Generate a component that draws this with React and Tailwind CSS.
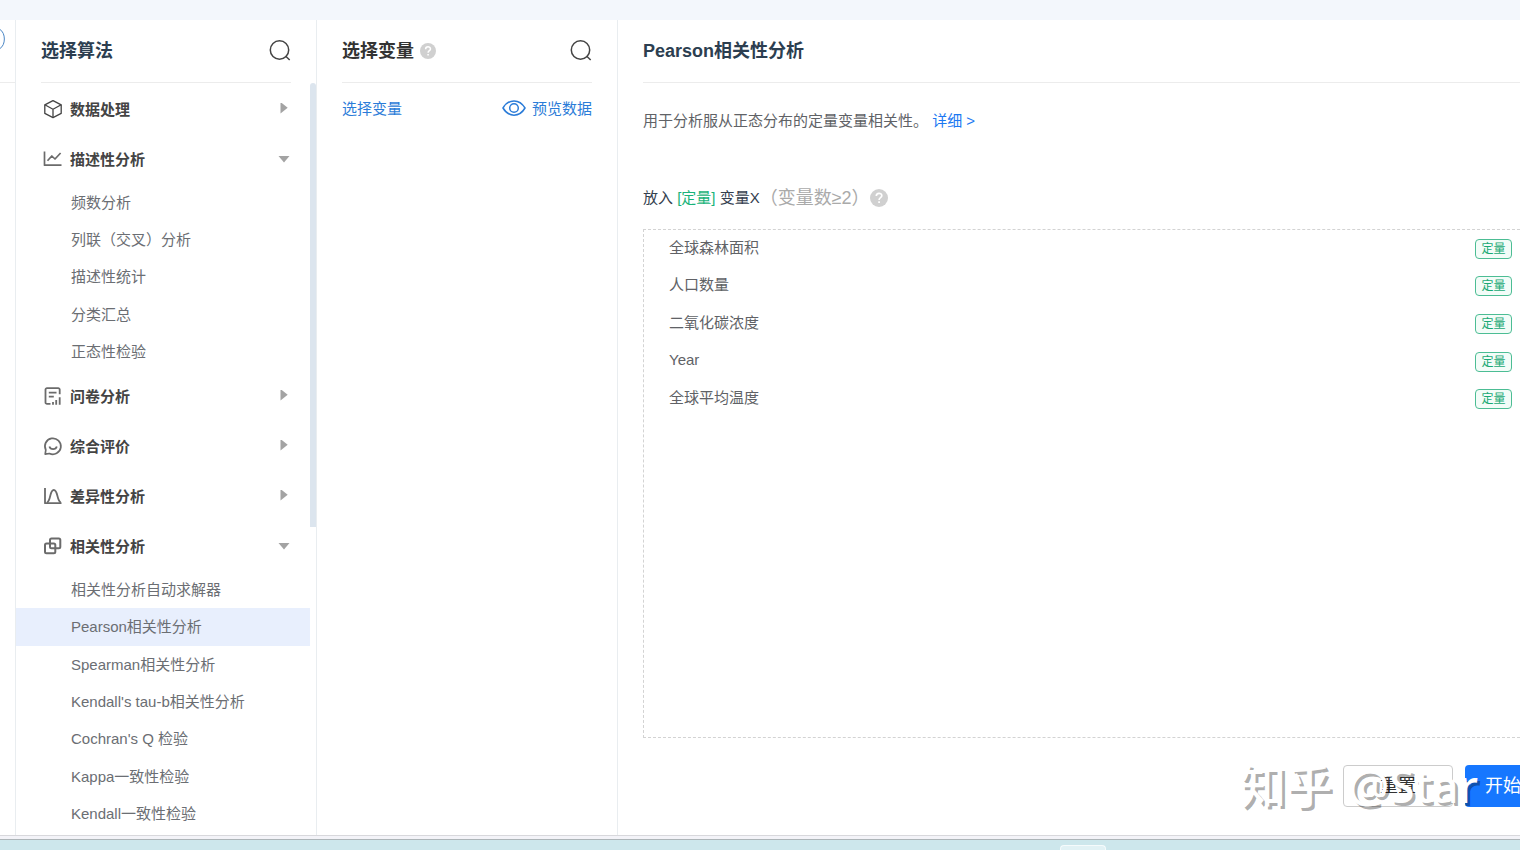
import React from "react";

const categories = [
  { name: "数据处理", icon: "cube" },
  {
    name: "描述性分析",
    icon: "trend",
    listHeight: "h-[187px]",
    items: ["频数分析", "列联（交叉）分析", "描述性统计", "分类汇总", "正态性检验"],
  },
  { name: "问卷分析", icon: "survey" },
  { name: "综合评价", icon: "smile" },
  { name: "差异性分析", icon: "curve" },
  {
    name: "相关性分析",
    icon: "squares",
    listHeight: "h-[262px]",
    items: [
      "相关性分析自动求解器",
      "Pearson相关性分析",
      "Spearman相关性分析",
      "Kendall's tau-b相关性分析",
      "Cochran's Q 检验",
      "Kappa一致性检验",
      "Kendall一致性检验",
    ],
  },
];

const variables = ["全球森林面积", "人口数量", "二氧化碳浓度", "Year", "全球平均温度"];

const iconShapes = {
  cube: (
    <g strokeWidth="1.3" stroke="#444">
      <path d="M9 .6 17.200 4.800v8.600L9 17.600.8 13.400V4.800Z" />
      <path d="M.8 4.800l8.200 4.400 8.200-4.400M9 9.200v8.400" />
    </g>
  ),
  trend: (
    <g strokeWidth="1.7">
      <path d="M.5 1.500v13.700h17" />
      <path d="M3.500 10.800 7.800 6l3.200 3 5.600-6" />
    </g>
  ),
  survey: (
    <g strokeWidth="1.8">
      <path d="M6.500 16.900H3a1.500 1.500 0 0 1-1.500-1.500V2.600a1.500 1.500 0 0 1 1.500-1.500h11.200a1.500 1.500 0 0 1 1.500 1.500v4.600" />
      <path d="M4.800 5.700h7.700M4.800 9.700h5M9 17.700v-2.800M12.200 17.700v-4.700M15.700 17.700v-7.500" />
    </g>
  ),
  smile: (
    <g strokeWidth="1.7">
      <path d="M1.200 17.200l.6-4.200A8 8 0 1 1 5.400 16.500Z" />
      <path d="M5.400 9.500c1 3.500 6.400 3.500 7.400 0" />
    </g>
  ),
  curve: (
    <g strokeWidth="1.8">
      <path d="M1 1v15.200h16.500" />
      <path d="M3 15.500C7 14 5.500 3 9.800 3s2.900 11 7 12.500" />
    </g>
  ),
  squares: (
    <g strokeWidth="2">
      <rect x="6" y="1.500" width="10.300" height="9.800" rx="1.500" />
      <rect x="1" y="6.500" width="10.300" height="9.800" rx="1.500" />
    </g>
  ),
};

function CategoryIcon({ name }) {
  return (
    <svg viewBox="0 0 18 18" className="size-[18px] shrink-0 overflow-visible" fill="none" stroke="#6b6b6b" strokeLinejoin="round" aria-hidden="true">
      {iconShapes[name]}
    </svg>
  );
}

function Arrow({ open }) {
  return (
    <svg viewBox="0 0 12 12" className="ml-auto size-3 shrink-0" fill="#a3a3a3" aria-hidden="true">
      {open ? <path d="M.5 3h11L6 9.500Z" /> : <path d="M2.500 -1v11.500L9.700 4.700Z" />}
    </svg>
  );
}

function SearchButton({ label }) {
  return (
    <button type="button" aria-label={label} className="ml-auto">
      <svg viewBox="0 0 22 22" className="size-[22px]" fill="none" stroke="#444" strokeWidth="1.500" aria-hidden="true">
        <circle cx="10.500" cy="10" r="9.200" />
        <path d="m16.500 16 4.200 4" />
      </svg>
    </button>
  );
}

function HelpButton({ size }) {
  return (
    <button type="button" aria-label="帮助" className={size}>
      <svg viewBox="0 0 18 18" className="size-full" fill="none" aria-hidden="true">
        <circle cx="9" cy="9" r="9" fill="#d0d0d0" />
        <path d="M6.300 7c0-3.600 5.500-3.500 5.500-.2 0 1.900-2.700 1.900-2.700 4.100M9.100 12.300v1.800" stroke="#fff" strokeWidth="1.700" />
      </svg>
    </button>
  );
}

function PanelHeader({ children }) {
  return <header className="mx-[25px] flex h-[63px] shrink-0 items-center border-b border-[#ececec]">{children}</header>;
}

function AlgorithmPanel() {
  return (
    <section className="flex w-[301px] shrink-0 flex-col border-r border-[#e9edf0]">
      <PanelHeader>
        <h2 className="text-lg font-bold text-[#2c3e50]">选择算法</h2>
        <SearchButton label="搜索算法" />
      </PanelHeader>
      <div className="flex min-h-0 flex-1 overflow-hidden">
        <nav className="min-w-0 flex-1 pt-px">
          {categories.map((c) => (
            <div key={c.name}>
              <button type="button" aria-expanded={Boolean(c.items)} className="flex h-[50px] w-full items-center gap-2 pr-5 pl-7 text-[15px] font-bold text-[#444]">
                <CategoryIcon name={c.icon} />
                <span className="pt-0.5">{c.name}</span>
                <Arrow open={Boolean(c.items)} />
              </button>
              {c.items && (
                <ul className={`grid auto-rows-fr ${c.listHeight}`}>
                  {c.items.map((item) => (
                    <li key={item} className={item === "Pearson相关性分析" ? "bg-[#e8effd]" : ""}>
                      <a href="#" className="flex h-full items-center pl-[55px] text-[15px] leading-5 text-[#6b6e73]">
                        {item}
                      </a>
                    </li>
                  ))}
                </ul>
              )}
            </div>
          ))}
        </nav>
        <div className="h-[444px] w-1.5 shrink-0 rounded-t-sm bg-[#dce5ee]" />
      </div>
    </section>
  );
}

function VariablePanel() {
  return (
    <section className="flex w-[301px] shrink-0 flex-col border-r border-[#e9edf0]">
      <PanelHeader>
        <h2 className="text-lg font-bold text-[#333]">选择变量</h2>
        <HelpButton size="ml-1.5 size-4" />
        <SearchButton label="搜索变量" />
      </PanelHeader>
      <div className="mx-[25px] flex items-center justify-between pt-[15px] text-[15px] text-[#2b7cd8]">
        <a href="#">选择变量</a>
        <a href="#" className="flex items-center gap-1.5">
          <svg viewBox="0 0 24 18" className="h-[18px] w-6" fill="none" stroke="currentColor" strokeWidth="1.500" aria-hidden="true">
            <path d="M1 8C6.500-1.500 17.500-1.500 23 8 17.500 17.500 6.500 17.500 1 8Z" />
            <circle cx="12" cy="8" r="4.300" />
          </svg>
          预览数据
        </a>
      </div>
    </section>
  );
}

function AnalysisPanel() {
  return (
    <main className="flex min-w-0 flex-1 flex-col pl-[25px]">
      <header className="flex h-[63px] shrink-0 items-center border-b border-[#ececec]">
        <h1 className="text-lg font-bold text-[#2c3e50]">Pearson相关性分析</h1>
      </header>
      <p className="mt-[26px] text-[15px] leading-6 text-[#606266]">
        用于分析服从正态分布的定量变量相关性。{" "}
        <a href="#" className="text-[#1b78f2]">详细 &gt;</a>
      </p>
      <div className="mt-[49px] flex h-8 items-center text-[15px] text-[#34404e]">
        <span>
          放入 <span className="text-[#19b37a]">[定量]</span> 变量X
        </span>
        <span className="text-lg text-[#aaa]">（变量数≥2）</span>
        <HelpButton size="size-[18px]" />
      </div>
      <ul className="mt-[15px] grid min-h-0 flex-1 auto-rows-min content-start border border-r-0 border-dashed border-[#d3d3d3] pr-2 pl-[25px]">
        <li>
          <ul className="grid h-[188px] auto-rows-fr">
            {variables.map((v) => (
              <li key={v} className="flex items-center justify-between text-[15px] text-[#606266]">
                <span className="pb-0.5">{v}</span>
                <span className="flex h-5 w-[37px] items-center justify-center rounded border border-[#4cbd94] bg-[#f3fcf8] text-xs text-[#19a974]">定量</span>
              </li>
            ))}
          </ul>
        </li>
      </ul>
      <footer className="relative mt-[27px] mb-7 flex h-[42px] shrink-0 justify-end gap-3">
        <button type="button" className="w-[110px] rounded-sm border border-[#ccc] text-lg text-[#333]">重置</button>
        <button type="button" className="w-[55px] overflow-hidden rounded-l-sm bg-[#1677ff] pl-5 text-left text-lg whitespace-nowrap text-white">开始</button>
        <span className="pointer-events-none absolute -top-3 right-[42px] flex gap-4 font-['Noto_Sans','Noto_Sans_CJK_SC',sans-serif] text-[46px] leading-[64px] font-medium whitespace-nowrap text-white [text-shadow:3px_3px_0_rgb(0_0_0/0.33)]">
          <span>知乎</span>
          <span>@Star</span>
        </span>
      </footer>
    </main>
  );
}

export default function App() {
  return (
    <div className="flex h-screen flex-col overflow-hidden bg-white font-['Liberation_Sans','Noto_Sans_CJK_SC',sans-serif]">
      <div className="h-5 shrink-0 bg-[#f3f7fc]" />
      <div className="flex min-h-0 flex-1">
        <aside className="w-4 shrink-0 border-r border-[#e9edf0]">
          <div className="h-[63px] border-b border-[#ececec] pt-2">
            <svg viewBox="0 0 6 22" className="h-[22px] w-1.5" fill="none" stroke="#4a86c5" aria-hidden="true">
              <path d="M0 1.500c5.800 3.500 5.800 15.500 0 19" />
            </svg>
          </div>
        </aside>
        <AlgorithmPanel />
        <VariablePanel />
        <AnalysisPanel />
      </div>
      <div className="h-[5px] shrink-0 border-t border-b border-t-[#d8d8dc] border-b-[#adb5b8] bg-[#f3f3f8]" />
      <div className="flex h-2.5 shrink-0 items-end justify-end bg-[#cde7ec] pr-[414px]">
        <div className="h-[5px] w-[46px] rounded-t border border-b-0 border-white/70 bg-[#e2f2f5]" />
      </div>
    </div>
  );
}
